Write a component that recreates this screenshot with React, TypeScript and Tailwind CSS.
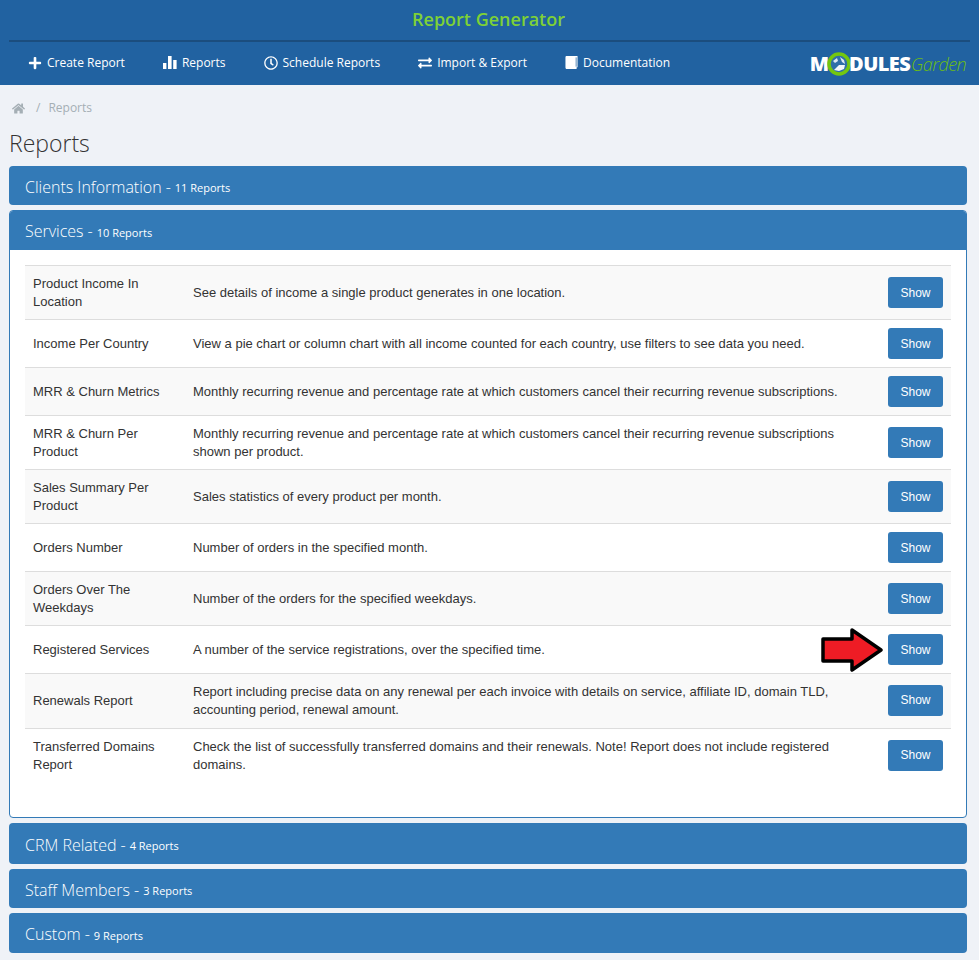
import { FaExchangeAlt, FaHome, FaPlus, FaRegClock } from "react-icons/fa";

const NAV = [
  { label: "Create Report", icon: "plus" },
  { label: "Reports", icon: "bars" },
  { label: "Schedule Reports", icon: "clock" },
  { label: "Import & Export", icon: "swap" },
  { label: "Documentation", icon: "book" },
];

const ROWS = [
  { name: "Product Income In Location", desc: "See details of income a single product generates in one location.", h: "h-[54px]" },
  { name: "Income Per Country", desc: "View a pie chart or column chart with all income counted for each country, use filters to see data you need.", h: "h-[48px]" },
  { name: "MRR & Churn Metrics", desc: "Monthly recurring revenue and percentage rate at which customers cancel their recurring revenue subscriptions.", h: "h-[48px]" },
  { name: "MRR & Churn Per Product", desc: "Monthly recurring revenue and percentage rate at which customers cancel their recurring revenue subscriptions shown per product.", h: "h-[54px]" },
  { name: "Sales Summary Per Product", desc: "Sales statistics of every product per month.", h: "h-[54px]" },
  { name: "Orders Number", desc: "Number of orders in the specified month.", h: "h-[48px]" },
  { name: "Orders Over The Weekdays", desc: "Number of the orders for the specified weekdays.", h: "h-[54px]" },
  { name: "Registered Services", desc: "A number of the service registrations, over the specified time.", h: "h-[48px]" },
  { name: "Renewals Report", desc: "Report including precise data on any renewal per each invoice with details on service, affiliate ID, domain TLD, accounting period, renewal amount.", h: "h-[55px]" },
  { name: "Transferred Domains Report", desc: "Check the list of successfully transferred domains and their renewals. Note! Report does not include registered domains.", h: "h-[54px]" },
];

function NavIcon({ kind }: { kind: string }) {
  if (kind === "plus") return <FaPlus size={14} />;
  if (kind === "bars")
    return (
      <svg width="14" height="13" viewBox="0 0 14 13" fill="white">
        <rect x="0" y="7" width="3.4" height="6" />
        <rect x="5" y="0" width="3.6" height="13" />
        <rect x="10.2" y="4" width="3.4" height="9" />
      </svg>
    );
  if (kind === "clock") return <FaRegClock size={14} />;
  if (kind === "swap") return <FaExchangeAlt size={14} />;
  return (
    <svg width="13" height="15" viewBox="0 0 14 15">
      <path d="M2 0.5H13.5V12.5H12.5V14.5H2C0.9 14.5 0.5 13.6 0.5 12.5V2C0.5 1 1 0.5 2 0.5Z" fill="white" />
      <path d="M12 2V12" stroke="#2162a1" strokeWidth="0.8" />
    </svg>
  );
}

function PanelHead({ title, count, h }: { title: string; count: string; h: string }) {
  return (
    <div className={`${h} bg-[#337ab7] flex items-center pt-[2px] px-4 text-white font-['Open_Sans',sans-serif]`}>
      <span className="text-[16px] font-light">{title}</span>
      <span className="text-[16px] font-light mx-1">-</span>
      <span className="text-[11px] mt-1">{count}</span>
    </div>
  );
}

function Logo() {
  return (
    <div className="flex items-center font-['Open_Sans',sans-serif] text-[20px] leading-none mr-[4px]">
      <span className="font-extrabold text-white">M</span>
      <svg className="-mx-[2px]" width="24" height="24" viewBox="0 0 24 24">
        <circle cx="12" cy="12" r="10" fill="#2f6fa8" stroke="#74c70f" strokeWidth="3.5" />
        <path d="M6 9L10 6L11 9L8 11Z" fill="#dfe9f2" />
        <path d="M13 5L17 8L18 12L15 10Z" fill="#dfe9f2" />
        <path d="M7 18L12 13L18 13L17 17L12 19Z" fill="#f2f6fa" />
      </svg>
      <span className="font-extrabold text-white tracking-[-0.6px]">DULES</span>
      <span className="font-light italic text-[#6cbe12] text-[18px] tracking-[-0.6px] ml-px">Garden</span>
    </div>
  );
}

export default function App() {
  return (
    <div className="w-[979px] h-[960px] overflow-hidden bg-[#eff2f7] font-['Open_Sans',sans-serif]">
      <header className="h-[85px] bg-[#2162a1] px-[9px]">
        <div className="h-[42px] pb-[2px] border-b-2 border-[#1b4d7e] flex items-center justify-center">
          <h1 className="text-[18px] font-semibold text-[#7ed136] -ml-[2px]">Report Generator</h1>
        </div>
        <div className="h-[43px] flex items-center justify-between">
          <nav className="flex items-center text-white text-[12px] pl-[19px] gap-[38px] -mt-[2px]">
            {NAV.map((n) => (
              <a key={n.label} className="flex items-center gap-[5px]">
                <NavIcon kind={n.icon} />
                <span>{n.label}</span>
              </a>
            ))}
          </nav>
          <Logo />
        </div>
      </header>

      <div className="px-[9px]">
        <div className="h-[46px] flex items-center pl-[3px] text-[#a5afb5] text-[12px]">
          <FaHome size={13} />
          <span className="ml-[11px] mr-[8px]">/</span>
          <span>Reports</span>
        </div>
        <h2 className="h-[35px] text-[23px] font-light text-[#333] leading-[24px]">Reports</h2>

        <div className="flex flex-col gap-[5px]">
          <div className="w-[958px] rounded overflow-hidden">
            <PanelHead title="Clients Information" count="11 Reports" h="h-[39px]" />
          </div>

          <div className="w-[958px] rounded overflow-hidden border border-[#337ab7] bg-white">
            <div className="-m-px">
              <PanelHead title="Services" count="10 Reports" h="h-[40px]" />
            </div>
            <div className="h-[568px] pt-[16px] px-[15px] font-['Liberation_Sans',sans-serif] text-[13px] leading-[18px] text-[#333]">
              <div className="border-t border-[#ddd]">
                {ROWS.map((r, i) => (
                  <div key={r.name} className={`${r.h} flex items-center ${i < 9 ? "border-b border-[#ddd]" : ""} ${i % 2 === 0 && i < 9 ? "bg-[#f9f9f9]" : "bg-white"}`}>
                    <div className="w-[168px] shrink-0 pl-2 pr-5">{r.name}</div>
                    <div className="flex-1 pr-[40px]">{r.desc}</div>
                    <button className={`w-[55px] h-[31px] mr-2 shrink-0 rounded-[3px] bg-[#337ab7] text-white text-[12px] ${i >= 8 ? "-mt-[2px]" : ""}`}>Show</button>
                  </div>
                ))}
              </div>
            </div>
          </div>

          <div className="w-[958px] rounded overflow-hidden">
            <PanelHead title="CRM Related" count="4 Reports" h="h-[41px]" />
          </div>
          <div className="w-[958px] rounded overflow-hidden">
            <PanelHead title="Staff Members" count="3 Reports" h="h-[39px]" />
          </div>
          <div className="w-[958px] rounded overflow-hidden">
            <PanelHead title="Custom" count="9 Reports" h="h-[40px]" />
          </div>
        </div>
      </div>

      <svg className="absolute left-[821px] top-[628px]" width="62" height="44" viewBox="0 0 62 44">
        <polygon points="2,11 31,11 31,2 60,22 31,42 31,33 2,33" fill="#ee1c25" stroke="#000" strokeWidth="3.5" strokeLinejoin="round" />
      </svg>
    </div>
  );
}
